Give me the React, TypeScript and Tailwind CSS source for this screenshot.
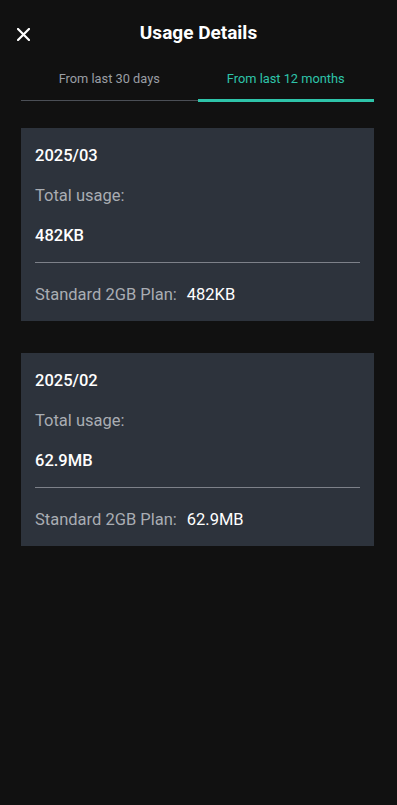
import React from "react";

const cards = [
  { month: "2025/03", total: "482KB", plan: "Standard 2GB Plan:", planUsage: "482KB" },
  { month: "2025/02", total: "62.9MB", plan: "Standard 2GB Plan:", planUsage: "62.9MB" },
];

const UsageCard = ({ month, total, plan, planUsage }: (typeof cards)[number]) => {
  return (
    <div className="bg-[#2d333c] px-[14px] pt-4 pb-[14px]">
      <div className="flex flex-col gap-4 text-[16.5px] leading-6">
        <span className="font-medium text-white">{month}</span>
        <span className="text-[#a9adb3]">Total usage:</span>
        <span className="font-medium text-white">{total}</span>
      </div>
      <div className="mt-[14px] h-px bg-[#7d8189]" />
      <div className="mt-[20px] flex h-6 items-center text-[16.5px] leading-6">
        <span className="text-[#a9adb3]">{plan}</span>
        <span className="ml-[10px] text-white">{planUsage}</span>
      </div>
    </div>
  );
};

const App = () => {
  return (
    <div className="min-h-[805px] w-full bg-[#111111] font-['Roboto',sans-serif]">
      <header className="relative flex h-[68px] items-center justify-center">
        <button className="absolute left-[17px] top-[28px] text-white">
          <svg width="13" height="13" viewBox="0 0 13 13" fill="none">
            <path
              d="M1 1L12 12M12 1L1 12"
              stroke="white"
              strokeWidth="2.2"
              strokeLinecap="square"
            />
          </svg>
        </button>
        <h1 className="-mt-px text-[19px] font-bold text-white">Usage Details</h1>
      </header>

      <nav className="ml-[21px] mr-[23px] flex">
        <div className="flex flex-1 flex-col items-stretch">
          <span className="pt-[2px] pb-[11px] text-center text-[12.8px] leading-[18px] text-[#9a9ea4]">
            From last 30 days
          </span>
          <div className="flex h-[3px] items-center">
            <div className="h-px w-full bg-[#4b4f56]" />
          </div>
        </div>
        <div className="flex flex-1 flex-col items-stretch">
          <span className="pt-[2px] pb-[11px] text-center text-[12.8px] leading-[18px] text-[#2ec4a9]">
            From last 12 months
          </span>
          <div className="h-[3px] w-full bg-[#2ec4a9]" />
        </div>
      </nav>

      <main className="ml-[21px] mr-[23px] mt-[26px] flex flex-col gap-8">
        {cards.map((card) => (
          <UsageCard key={card.month} {...card} />
        ))}
      </main>
    </div>
  );
};

export default App;
